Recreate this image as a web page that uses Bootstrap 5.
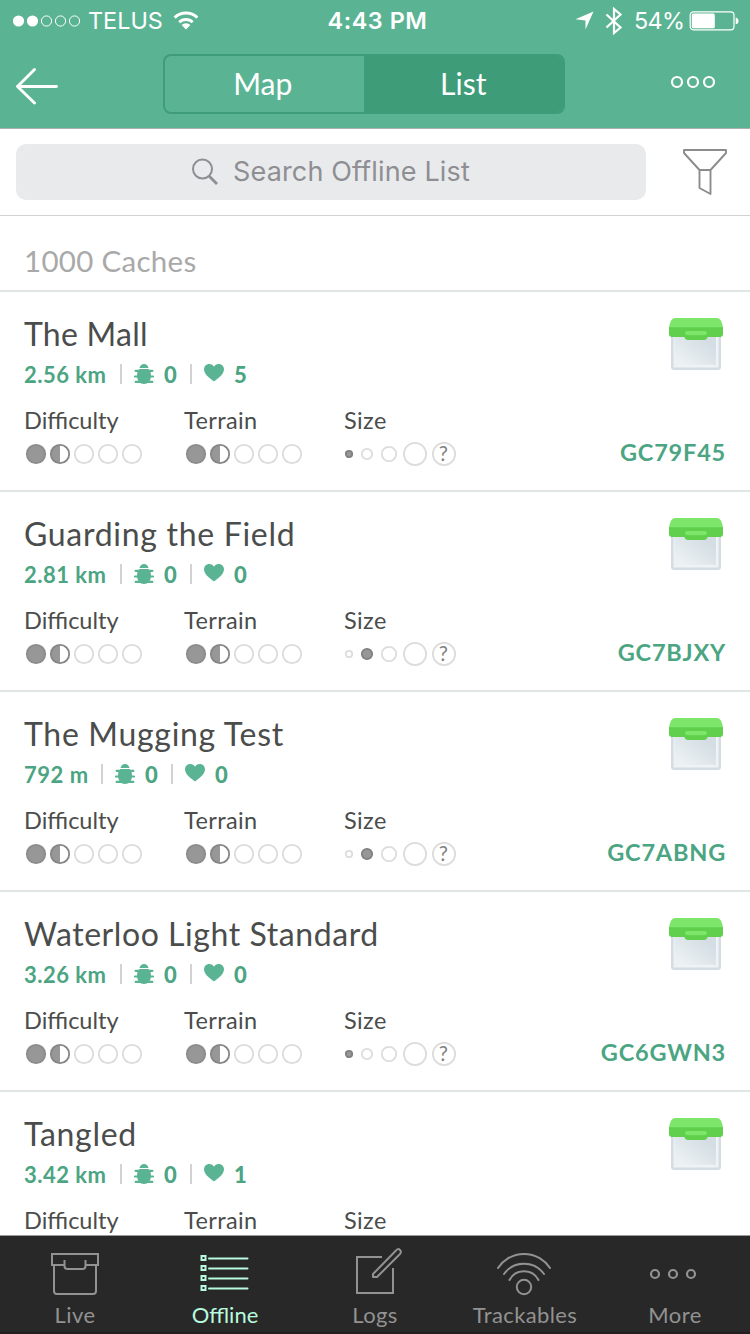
<!DOCTYPE html>
<html lang="en">
<head>
<meta charset="utf-8">
<meta name="viewport" content="width=device-width, initial-scale=1">
<title>Offline List</title>
<link href="https://cdn.jsdelivr.net/npm/bootstrap@5.3.0/dist/css/bootstrap.min.css" rel="stylesheet">
<style>
  :root { --green:#5ab493; --green-dark:#3e9c79; --green-text:#4ba582; --ink:#4a4d4b; --rule:#e0e6e5; }
  body { font-family:Lato,"Liberation Sans",sans-serif; color:var(--ink); background:#fff; }
  svg { display:block; flex:none; }
  .screen { height:1334px; width:750px; }
  .top { background:var(--green); height:129px; border-bottom:1px solid #a9b0ad; }
  .status { height:40px; font:400 23.4px/40px Inter,sans-serif; padding:1px 11px 0 12px; }
  .status-side { flex:1 0 0; }
  .carrier { width:85px; margin-left:7px; letter-spacing:0; }
  .clock { font-weight:600; letter-spacing:.55px; padding-left:4px; }
  .percent { width:55px; margin-left:10px; letter-spacing:-.7px; }
  .bar { height:88px; padding:0 34px 0 15px; }
  .segments { width:402px; height:60px; border:2px solid var(--green-dark); border-radius:8px; margin-left:104px; overflow:hidden; }
  .segments button { border:0; background:none; color:#fff; font-size:30px; line-height:54px; padding:0 4px 2px 0; letter-spacing:0; }
  .segments .on { background:var(--green-dark); padding-right:0; margin-left:-1px; }
  .search { height:87px; padding:0 22px 0 16px; border-bottom:1px solid #cfd4d3; }
  .field { width:630px; height:56px; border-radius:10px; background:#e9eaec; color:#8e8e93; font:400 27px/54px Inter,sans-serif; padding-left:175px; }
  .field span { margin-left:14px; letter-spacing:.15px; padding-bottom:1px; }
  .total { height:76px; border-bottom:2px solid var(--rule); padding:23px 24px 0; font-size:29.5px; line-height:44px; color:#a9a9a9; letter-spacing:.3px; }
  .cache { height:200px; border-bottom:2px solid var(--rule); padding:22px 25px 0 24px; }
  .cache h2 { font-size:32px; line-height:40px; font-weight:400; margin:0; letter-spacing:.7px; white-space:nowrap; }
  .cache:first-child h2 { letter-spacing:.25px; }
  .cache:nth-child(4) h2 { letter-spacing:.57px; }
  .meta { height:30px; margin-top:5px; font-size:22px; line-height:30px; font-weight:700; color:var(--green-text); letter-spacing:.5px; }
  .meta i { width:2px; height:20px; background:#d2d2d2; margin:0 12px 0 14px; }
  .meta b { margin-left:10px; width:12px; white-space:nowrap; padding-top:1px; }
  .heart { margin-bottom:2px; }
  .dist { width:82px; white-space:nowrap; padding-top:1px; }
  .dist.short { width:63px; }
  .attr { width:160px; font-size:23.5px; line-height:30px; letter-spacing:.4px; }
  .attr:first-child { letter-spacing:0; }
  .attr svg { margin-top:7px; }
  .side { padding-top:4px; height:153px; }
  .side svg { margin-right:2px; }
  .code { font-size:23.5px; line-height:30px; font-weight:700; color:var(--green-text); white-space:nowrap; letter-spacing:.8px; margin-right:-1px; }
  .tabs { height:99px; background:#282828; border-top:1px solid #9a9a9a; box-shadow:inset 0 -2px #211f20; color:#929292; font-size:22px; line-height:28px; letter-spacing:.4px; }
  .tabs svg { height:56px; margin-top:9.500px; margin-bottom:-.5px; }
  .tabs .current { color:#b8fadf; letter-spacing:0; }
</style>
</head>
<body>
<svg width="0" height="0" class="position-absolute" aria-hidden="true">
  <defs>
    <linearGradient id="glass" x1="0" y1="1" x2="1" y2="0"><stop offset=".1" stop-color="#edf1f4"/><stop offset=".8" stop-color="#d3dde3"/></linearGradient>
    <symbol id="box" viewBox="0 0 54 52">
      <path d="M2 16H52V49Q52 52 49 52H5Q2 52 2 49Z" fill="#d3dde3"/>
      <path d="M4.500 16H49.500V49.500H4.500Z" fill="#eff3f5"/>
      <path d="M5.500 16H47V47H5.500Z" fill="url(#glass)"/>
      <path d="M0 9H54V16Q54 19 51 19H38.500Q38 22 35 22H19Q16 22 15.500 19H3Q0 19 0 16Z" fill="#5fcf4c"/>
      <path d="M0 9.300Q1.500 0 6 0H48Q52.500 0 54 9.300Z" fill="#7de569"/>
      <rect x="16" y="13" width="22" height="4.200" rx="2.100" fill="#7de569"/>
    </symbol>
    <symbol id="bug" viewBox="0 0 20 20">
      <path d="M5.500 4Q6.500 0 10 0T14.500 4Z" fill="#5ab493"/>
      <path d="M5.500 5H14.500C16.300 6.500 17 8.500 17 11.500C17 16.500 14 20 10 20S3 16.500 3 11.500C3 8.500 3.700 6.500 5.500 5Z" fill="#5ab493"/>
      <path d="M1.600 6.900H18.400M1 12.500H19M1.600 17.900H18.400" stroke="#5ab493" stroke-width="2.100" stroke-linecap="round"/>
    </symbol>
    <symbol id="heart" viewBox="0 0 20 18"><path d="M10 17.500C7 15 0 11 0 5.300C0 2.200 2.300 0 5.300 0C7.500 0 9.300 1.200 10 2.700C10.700 1.200 12.500 0 14.700 0C17.700 0 20 2.200 20 5.300C20 11 13 15 10 17.500Z" fill="#5ab493"/></symbol>
    <symbol id="rating" viewBox="0 0 120 24">
      <g fill="none" stroke-width="1.800">
        <circle cx="12" cy="12" r="9.200" fill="#979797" stroke="#8c8c8c"/>
        <path d="M36 3A9 9 0 0 0 36 21Z" fill="#979797"/>
        <circle cx="36" cy="12" r="9.200" stroke="#858585"/>
        <g stroke="#dcdcdc"><circle cx="60" cy="12" r="9.200"/><circle cx="84" cy="12" r="9.200"/><circle cx="108" cy="12" r="9.200"/></g>
      </g>
    </symbol>
    <symbol id="size-rest" viewBox="0 0 120 24">
      <g fill="none" stroke="#dcdcdc" stroke-width="1.800"><circle cx="45" cy="12" r="7.200"/><circle cx="71" cy="12" r="11.100"/><circle cx="100" cy="12" r="11.100"/></g>
      <text x="99.500" y="19" text-anchor="middle" font-family="Lato,sans-serif" font-size="20.500" fill="#808080">?</text>
    </symbol>
    <symbol id="micro" viewBox="0 0 120 24">
      <circle cx="5" cy="12" r="3.200" fill="#979797" stroke="#808080" stroke-width="1.800"/>
      <circle cx="23" cy="12" r="5.200" fill="none" stroke="#dcdcdc" stroke-width="1.800"/>
      <use href="#size-rest" width="120" height="24"/>
    </symbol>
    <symbol id="small-size" viewBox="0 0 120 24">
      <circle cx="5" cy="12" r="3.200" fill="none" stroke="#dcdcdc" stroke-width="1.800"/>
      <circle cx="23" cy="12" r="5.200" fill="#979797" stroke="#808080" stroke-width="1.800"/>
      <use href="#size-rest" width="120" height="24"/>
    </symbol>
  </defs>
</svg>

<div class="screen d-flex flex-column overflow-hidden">
  <header class="top text-white flex-shrink-0">
    <div class="status d-flex align-items-center">
      <div class="status-side d-flex align-items-center">
        <svg width="69" height="12" viewBox="0 0 69 12"><g fill="#fff"><circle cx="6.500" cy="6" r="5.600"/><circle cx="20.500" cy="6" r="5.600"/></g><g fill="none" stroke="#fff" stroke-width="1"><circle cx="34.500" cy="6" r="5.100"/><circle cx="48.500" cy="6" r="5.100"/><circle cx="62.500" cy="6" r="5.100"/></g></svg>
        <span class="carrier">TELUS</span>
        <svg width="26" height="19" viewBox="0 0 26 19"><path d="M13 18.500L8.600 14A6.300 6.300 0 0 1 17.400 14Z" fill="#fff"/><path d="M6.300 11.200A9.600 9.600 0 0 1 19.700 11.200M1.700 6.600A16.300 16.300 0 0 1 24.300 6.600" fill="none" stroke="#fff" stroke-width="3"/></svg>
      </div>
      <div class="clock">4:43 PM</div>
      <div class="status-side d-flex align-items-center justify-content-end">
        <svg width="19" height="19" viewBox="0 0 19 19"><path d="M18.500 .5L10.500 18.500V9.500L.5 8.200Z" fill="#fff"/></svg>
        <svg class="ms-2" width="22" height="28" viewBox="0 0 22 28"><path d="M4.500 7.500L18.500 20.500L12 26V2L18.500 7.500L4.500 20.500" fill="none" stroke="#fff" stroke-width="2.200"/></svg>
        <span class="percent">54%</span>
        <svg width="50" height="20" viewBox="0 0 50 20"><rect x="1.200" y=".8" width="43.800" height="18" rx="3.300" fill="none" stroke="#fff" stroke-width="1.200"/><rect x="2.800" y="2.500" width="23" height="14.700" rx="1.500" fill="#fff"/><path d="M46.700 6.500Q49.500 7 49.500 10T46.700 13.200Z" fill="#fff"/></svg>
      </div>
    </div>
    <nav class="bar d-flex align-items-center">
      <svg width="44" height="38" viewBox="0 0 44 38" style="margin-top:4px"><path d="M19.500 2.500L2.500 19.500L19.500 36M2.500 19.500H41.500" fill="none" stroke="#fff" stroke-width="2.900" stroke-linecap="round" stroke-linejoin="round"/></svg>
      <div class="segments d-flex"><button class="flex-fill w-50">Map</button><button class="on flex-fill w-50">List</button></div>
      <svg class="ms-auto" width="46" height="14" viewBox="0 0 46 14" style="margin-top:-4px"><g fill="none" stroke="#fff" stroke-width="2.200"><circle cx="7" cy="7" r="5"/><circle cx="23" cy="7" r="5"/><circle cx="39" cy="7" r="5"/></g></svg>
    </nav>
  </header>

  <section class="search d-flex align-items-center flex-shrink-0">
    <div class="field d-flex align-items-center">
      <svg width="28" height="28" viewBox="0 0 28 28"><circle cx="11.500" cy="11" r="9.500" fill="none" stroke="#8e8e93" stroke-width="2"/><path d="M18 18L26 26" stroke="#8e8e93" stroke-width="2.800"/></svg>
      <span>Search Offline List</span>
    </div>
    <svg class="ms-auto" width="46" height="48" viewBox="0 1 46 48"><path d="M2 3H44V6L28.500 23V47L17.500 41V23L2 6ZM17.500 23H28.500" fill="none" stroke="#8c8c8f" stroke-width="1.900" stroke-linejoin="round"/></svg>
  </section>

  <div class="total flex-shrink-0">1000 Caches</div>

  <main class="flex-grow-1 overflow-hidden" style="min-height:0">
    <article class="cache d-flex justify-content-between">
      <div>
        <h2>The Mall</h2>
        <div class="meta d-flex align-items-center"><span class="dist">2.56 km</span><i></i><svg width="20" height="20"><use href="#bug"/></svg><b>0</b><i></i><svg width="20" height="18" class="heart"><use href="#heart"/></svg><b>5</b></div>
        <div class="d-flex mt-3">
          <div class="attr">Difficulty<svg width="120" height="24"><use href="#rating"/></svg></div>
          <div class="attr">Terrain<svg width="120" height="24"><use href="#rating"/></svg></div>
          <div class="attr">Size<svg width="120" height="24"><use href="#micro"/></svg></div>
        </div>
      </div>
      <div class="side d-flex flex-column align-items-end justify-content-between"><svg width="54" height="52"><use href="#box"/></svg><span class="code">GC79F45</span></div>
    </article>
    <article class="cache d-flex justify-content-between">
      <div>
        <h2>Guarding the Field</h2>
        <div class="meta d-flex align-items-center"><span class="dist">2.81 km</span><i></i><svg width="20" height="20"><use href="#bug"/></svg><b>0</b><i></i><svg width="20" height="18" class="heart"><use href="#heart"/></svg><b>0</b></div>
        <div class="d-flex mt-3">
          <div class="attr">Difficulty<svg width="120" height="24"><use href="#rating"/></svg></div>
          <div class="attr">Terrain<svg width="120" height="24"><use href="#rating"/></svg></div>
          <div class="attr">Size<svg width="120" height="24"><use href="#small-size"/></svg></div>
        </div>
      </div>
      <div class="side d-flex flex-column align-items-end justify-content-between"><svg width="54" height="52"><use href="#box"/></svg><span class="code">GC7BJXY</span></div>
    </article>
    <article class="cache d-flex justify-content-between">
      <div>
        <h2>The Mugging Test</h2>
        <div class="meta d-flex align-items-center"><span class="dist short">792 m</span><i></i><svg width="20" height="20"><use href="#bug"/></svg><b>0</b><i></i><svg width="20" height="18" class="heart"><use href="#heart"/></svg><b>0</b></div>
        <div class="d-flex mt-3">
          <div class="attr">Difficulty<svg width="120" height="24"><use href="#rating"/></svg></div>
          <div class="attr">Terrain<svg width="120" height="24"><use href="#rating"/></svg></div>
          <div class="attr">Size<svg width="120" height="24"><use href="#small-size"/></svg></div>
        </div>
      </div>
      <div class="side d-flex flex-column align-items-end justify-content-between"><svg width="54" height="52"><use href="#box"/></svg><span class="code">GC7ABNG</span></div>
    </article>
    <article class="cache d-flex justify-content-between">
      <div>
        <h2>Waterloo Light Standard</h2>
        <div class="meta d-flex align-items-center"><span class="dist">3.26 km</span><i></i><svg width="20" height="20"><use href="#bug"/></svg><b>0</b><i></i><svg width="20" height="18" class="heart"><use href="#heart"/></svg><b>0</b></div>
        <div class="d-flex mt-3">
          <div class="attr">Difficulty<svg width="120" height="24"><use href="#rating"/></svg></div>
          <div class="attr">Terrain<svg width="120" height="24"><use href="#rating"/></svg></div>
          <div class="attr">Size<svg width="120" height="24"><use href="#micro"/></svg></div>
        </div>
      </div>
      <div class="side d-flex flex-column align-items-end justify-content-between"><svg width="54" height="52"><use href="#box"/></svg><span class="code">GC6GWN3</span></div>
    </article>
    <article class="cache d-flex justify-content-between">
      <div>
        <h2>Tangled</h2>
        <div class="meta d-flex align-items-center"><span class="dist">3.42 km</span><i></i><svg width="20" height="20"><use href="#bug"/></svg><b>0</b><i></i><svg width="20" height="18" class="heart"><use href="#heart"/></svg><b>1</b></div>
        <div class="d-flex mt-3">
          <div class="attr">Difficulty</div>
          <div class="attr">Terrain</div>
          <div class="attr">Size</div>
        </div>
      </div>
      <div class="side"><svg width="54" height="52"><use href="#box"/></svg></div>
    </article>
  </main>

  <!-- tab icons share a 60x56 drawing box above the label -->
  <footer class="tabs d-flex flex-shrink-0 text-center">
    <div class="col d-flex flex-column align-items-center"><svg width="60" viewBox="0 0 60 56"><path d="M19.500 19H7V8H53V19H40.500M19.500 14V20Q19.500 23 22.500 23H37.500Q40.500 23 40.500 20V14M9 19V45Q9 48 12 48H48Q51 48 51 45V19" fill="none" stroke="currentColor" stroke-width="2"/></svg>Live</div>
    <div class="col d-flex flex-column align-items-center current"><svg width="60" viewBox="1 0 60 56"><g fill="none" stroke="currentColor" stroke-width="2"><path d="M7.500 10H11.500V14H7.500ZM7.500 20H11.500V24H7.500ZM7.500 30H11.500V34H7.500ZM7.500 40H11.500V44H7.500Z"/><path d="M15 12.500H53.500M15 22.500H53.500M15 32.500H53.500M15 42.500H53.500" stroke-linecap="round"/></g></svg>Offline</div>
    <div class="col d-flex flex-column align-items-center"><svg width="60" viewBox="0 0 60 56"><g fill="none" stroke="currentColor" stroke-width="2"><path d="M37 11H12V47H48V22"/><path d="M28 28L51 4.500Q53 2 55 4Q57 6 54.500 8.500L32 31H28Z" stroke-linejoin="round"/></g></svg>Logs</div>
    <div class="col d-flex flex-column align-items-center"><svg width="60" viewBox="0 0 60 56"><g fill="none" stroke="currentColor" stroke-width="2" stroke-linecap="round"><circle cx="29" cy="41" r="7.200"/><path d="M14.500 34A16.500 16.500 0 0 1 43.500 34M9 28A24.500 24.500 0 0 1 49 28M3 22A31 31 0 0 1 55 22"/></g></svg>Trackables</div>
    <div class="col d-flex flex-column align-items-center"><svg width="60" viewBox="0 0 60 56"><g fill="none" stroke="currentColor" stroke-width="2.200"><circle cx="10" cy="28" r="4"/><circle cx="28" cy="28" r="4"/><circle cx="46" cy="28" r="4"/></g></svg>More</div>
  </footer>
</div>
<script src="https://cdn.jsdelivr.net/npm/bootstrap@5.3.0/dist/js/bootstrap.bundle.min.js"></script>
</body>
</html>
